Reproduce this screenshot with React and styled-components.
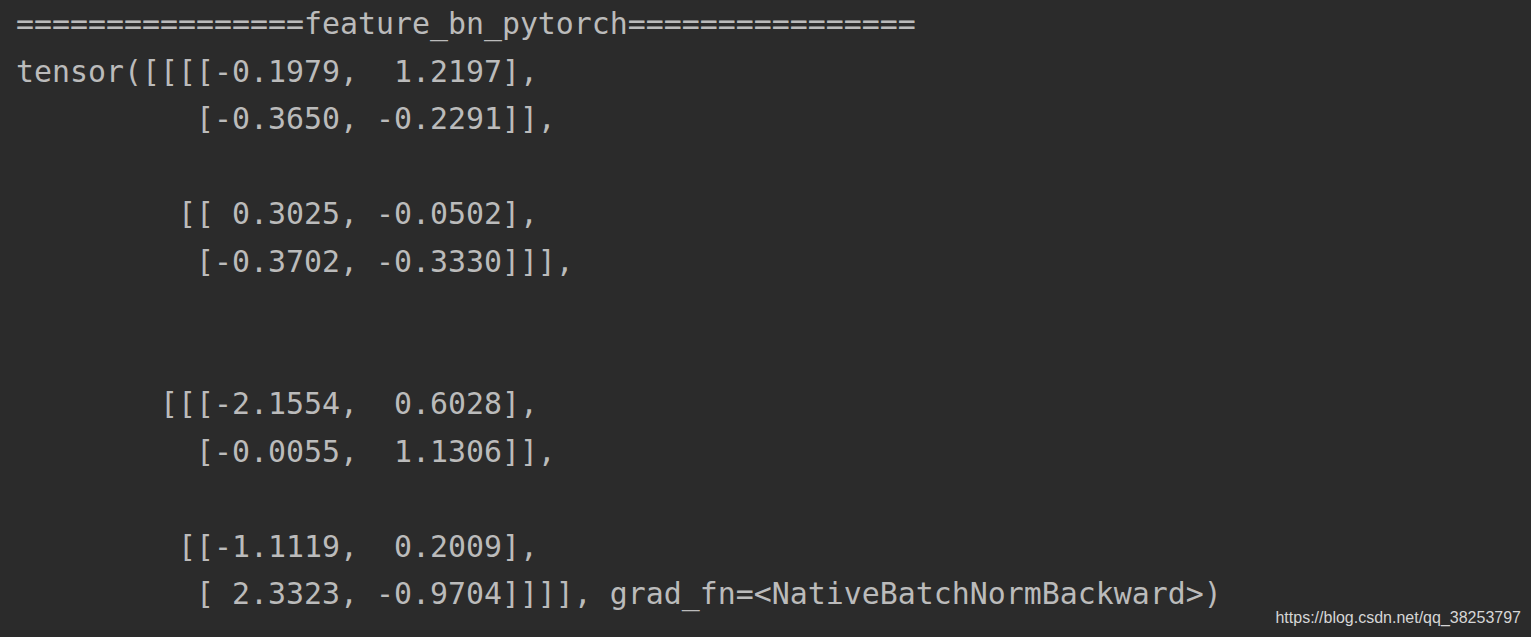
import React from "react";
import styled, { createGlobalStyle } from "styled-components";

const GlobalStyle = createGlobalStyle`
  html, body {
    margin: 0;
    padding: 0;
    background: #2b2b2b;
  }
`;

const Console = styled.div`
  position: relative;
  width: 1531px;
  height: 637px;
  background: #2b2b2b;
  overflow: hidden;
  padding: 0 0 0 16px;
  box-sizing: border-box;
`;

const Output = styled.pre`
  margin: 0;
  font-family: "DejaVu Sans Mono", "Liberation Mono", monospace;
  font-size: 29.9px;
  line-height: 47.5px;
  color: #bbbbbb;
  white-space: pre;
`;

const Watermark = styled.span`
  position: absolute;
  right: 10px;
  bottom: 10px;
  font-family: "Liberation Sans", Arial, sans-serif;
  font-size: 16px;
  color: #d6d6d6;
`;

const lines = [
  "================feature_bn_pytorch================",
  "tensor([[[[-0.1979,  1.2197],",
  "          [-0.3650, -0.2291]],",
  "",
  "         [[ 0.3025, -0.0502],",
  "          [-0.3702, -0.3330]]],",
  "",
  "",
  "        [[[-2.1554,  0.6028],",
  "          [-0.0055,  1.1306]],",
  "",
  "         [[-1.1119,  0.2009],",
  "          [ 2.3323, -0.9704]]]], grad_fn=<NativeBatchNormBackward>)",
];

export default function App() {
  return (
    <>
      <GlobalStyle />
      <Console>
        <Output>{lines.join("\n")}</Output>
        <Watermark>https://blog.csdn.net/qq_38253797</Watermark>
      </Console>
    </>
  );
}
